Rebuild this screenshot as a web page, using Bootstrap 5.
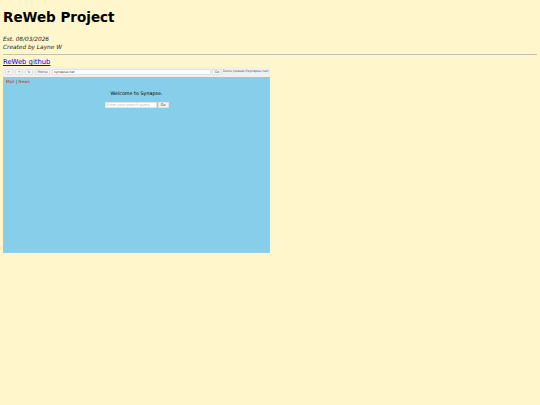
<!DOCTYPE html>
<html lang="en">
<head>
<meta charset="utf-8">
<title>ReWeb Project</title>
<link href="https://cdn.jsdelivr.net/npm/bootstrap@5.3.0/dist/css/bootstrap.min.css" rel="stylesheet">
<style>
html,body{height:100%}
body{background:#fff6cc;font-family:"DejaVu Sans",sans-serif;color:#000;padding:9px 3px 0;overflow:hidden}
.ttl{font-size:13.5px;font-weight:700;line-height:17px;margin:0 0 9px}
.meta{font-size:5.8px;font-style:italic;line-height:8px;margin:0;color:#222}
.rule{margin:3px 0 3px;border:0;border-top:1px solid #c4c1ae;opacity:1}
.gh{font-size:6.8px;line-height:9px;color:#0000ee;display:block;height:9px}
.frame{width:267px;height:185.7px;background:#87ceeb;box-shadow:inset 0 0 0 .5px #a5cfe0}
.bar{height:9.5px;background:#f0f0f0;gap:1px;padding:0 0 0 2px;font-size:3.4px;color:#555}
.tb{height:6px;background:#f6f6f6;border:.5px solid #e2e2e2;border-radius:1px;line-height:5px;white-space:nowrap;text-align:center;flex:none}
.bt{width:8px;margin-right:1px}
.bh{width:15px;margin-right:1px}
.bg{width:10px}
.addr{flex:1;height:6px;background:#fff;border:.5px solid #e2e2e2;padding:0 1px;line-height:5px;color:#333}
.st{font-size:3.3px;white-space:nowrap;overflow:hidden;width:47px;color:#555;flex:none}
.lnk{font-size:4.2px;padding:2px 3px 0;line-height:6px;color:#333}
.lnk a{color:#d22;text-decoration:none}
.wel{font-size:4.85px;line-height:7px;text-align:center;margin:5px 0 5px;color:#000}
.srch{gap:1px}
.qi{width:52px;height:6px;background:#fff;border:.5px solid #e2e2e2;font-size:3.6px;line-height:5px;color:#bbb;padding:0 1px}
.qb{height:6px;width:11px;text-align:center;background:#f2f2f2;border:.5px solid #e2e2e2;font-size:3.6px;line-height:5px;color:#444}
</style>
</head>
<body>
<h1 class="ttl">ReWeb Project</h1>
<p class="meta">Est. 08/03/2026</p>
<p class="meta">Created by Layne W</p>
<hr class="rule">
<a class="gh" href="#">ReWeb github</a>
<div class="frame">
  <div class="bar d-flex align-items-center">
    <span class="tb bt">←</span><span class="tb bt">→</span><span class="tb bt">↻</span><span class="tb bh">Home</span>
    <span class="addr">synapse.net</span>
    <span class="tb bg">Go</span>
    <span class="st">Done (reweb://synapse.net)</span>
  </div>
  <div class="lnk"><a href="#">Mail</a> | <a href="#">News</a></div>
  <p class="wel">Welcome to Synapse.</p>
  <div class="srch d-flex justify-content-center">
    <span class="qi">Enter your search query</span><span class="qb">Go</span>
  </div>
</div>
<script src="https://cdn.jsdelivr.net/npm/bootstrap@5.3.0/dist/js/bootstrap.bundle.min.js"></script>
</body>
</html>
